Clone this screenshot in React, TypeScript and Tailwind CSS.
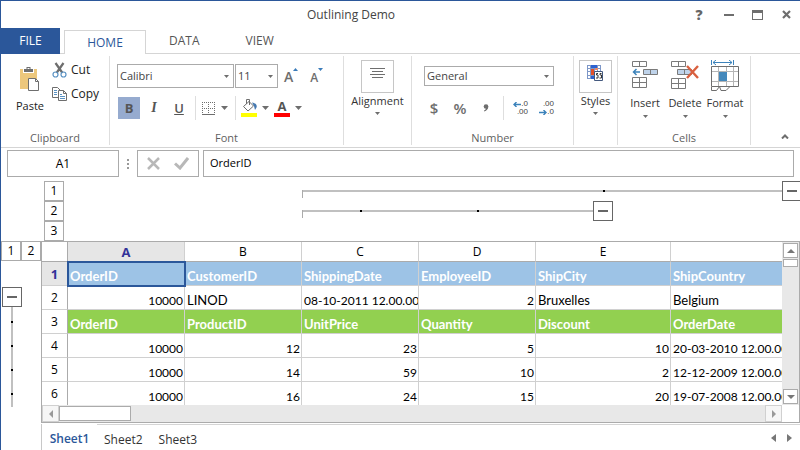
import React from "react";

type Row = { kind: "blue" | "green" | "plain"; cells: (string | number)[] };

const rows: Row[] = [
  { kind: "blue", cells: ["OrderID", "CustomerID", "ShippingDate", "EmployeeID", "ShipCity", "ShipCountry"] },
  { kind: "plain", cells: [10000, "LINOD", "08-10-2011 12.00.00", 2, "Bruxelles", "Belgium"] },
  { kind: "green", cells: ["OrderID", "ProductID", "UnitPrice", "Quantity", "Discount", "OrderDate"] },
  { kind: "plain", cells: [10000, 12, 23, 5, 10, "20-03-2010 12.00.00"] },
  { kind: "plain", cells: [10000, 14, 59, 10, 2, "12-12-2009 12.00.00"] },
  { kind: "plain", cells: [10000, 16, 24, 15, 20, "19-07-2008 12.00.00"] },
];

const rowStyle = {
  blue: "bg-[#9dc3e6] font-bold text-white",
  green: "bg-[#92d050] font-bold text-white",
  plain: "bg-white text-black",
};

// Numbers and dates are set one size below words.
const hasDigits = (cell: string | number) => /\d/.test(String(cell));

function Caret() {
  return (
    <svg width="7" height="4" viewBox="0 0 7 4" aria-hidden="true">
      <path d="M0 0h7L3.5 4z" fill="#6e6e6e" />
    </svg>
  );
}

function SmallCaret() {
  return (
    <svg width="5" height="3" viewBox="0 0 5 3" aria-hidden="true">
      <path d="M0 0h5L2.5 3z" fill="#6e6e6e" />
    </svg>
  );
}

function Picker({ label, value, className }: { label: string; value: string; className: string }) {
  return (
    <div className={`relative ${className}`}>
      <select
        aria-label={label}
        defaultValue={value}
        className="h-full w-full appearance-none border border-[#ababab] bg-white pl-[2px] text-[11px] text-[#444]"
      >
        <option>{value}</option>
      </select>
      <span className="pointer-events-none absolute inset-y-0 right-[5px] flex items-center">
        <SmallCaret />
      </span>
    </div>
  );
}

function Group({ label, className = "", children }: { label?: string; className?: string; children: React.ReactNode }) {
  return (
    <section className={`flex shrink-0 flex-col ${className}`}>
      <div className="h-[76px]">{children}</div>
      <div className="text-center text-[11px] leading-4 text-[#5f5f5f]">{label}</div>
    </section>
  );
}

function Divider() {
  return <div className="my-[2px] w-px shrink-0 bg-[#dedede]" />;
}

function PasteIcon() {
  return (
    <svg width="20" height="26" viewBox="0 0 20 26" aria-hidden="true">
      <path d="M0 3h17v20H0z" fill="#ecc77c" />
      <path d="M3 2h11v5H3z" fill="#fff" />
      <path d="M4 3h2.500V1h4v2H13v3H4z" fill="#6e6e6e" />
      <path d="M7.500 2h2v1h-2z" fill="#fff" />
      <path d="M8.500 12.500h7l3 3v9h-10z" fill="#fff" stroke="#6e6e6e" />
      <path d="M15.500 12.500v3h3" fill="none" stroke="#6e6e6e" />
    </svg>
  );
}

function CutIcon() {
  return (
    <svg width="15" height="16" viewBox="0 0 15 16" fill="none" aria-hidden="true">
      <path d="M3.500 1l7 10M11.500 1l-7 10" stroke="#6e6e6e" strokeWidth="2.200" />
      <circle cx="3.500" cy="12.500" r="2.500" stroke="#5b93c4" strokeWidth="1.200" />
      <circle cx="11.500" cy="12.500" r="2.500" stroke="#5b93c4" strokeWidth="1.200" />
    </svg>
  );
}

function CopyIcon() {
  return (
    <svg width="15" height="14" viewBox="0 0 15 14" aria-hidden="true">
      <path d="M.5.500h5l3 3v7h-8z" fill="#fff" stroke="#6e6e6e" />
      <path d="M2 3.500h3M2 5.500h3M2 7.500h3" stroke="#5b93c4" />
      <path d="M6.500 3.500h5l3 3v7h-8z" fill="#fff" stroke="#6e6e6e" />
      <path d="M11.500 3.500v3h3" fill="none" stroke="#6e6e6e" />
      <path d="M8 7.500h2M8 9.500h5M8 11.500h5" stroke="#5b93c4" />
    </svg>
  );
}

function BordersIcon() {
  return (
    <svg width="13" height="13" viewBox="0 0 13 13" fill="none" aria-hidden="true">
      <path d="M0 .5h13M0 6.500h13M.5 0v12M6.500 0v12M12.500 0v12" stroke="#6e6e6e" strokeDasharray="1 1" />
      <path d="M0 12.500h13" stroke="#6e6e6e" />
    </svg>
  );
}

function FillIcon() {
  return (
    <svg width="16" height="18" viewBox="0 0 16 18" fill="none" aria-hidden="true">
      <path d="M2.500 7.500L8 2.500l4.500 4.500-5.500 5z" stroke="#6e6e6e" />
      <path d="M5.500 5V.5h3V6" stroke="#6e6e6e" />
      <path d="M11 3.500c3.500.500 5.500 2.500 4.500 5L14 11l-1-4z" fill="#4478b0" />
      <path d="M0 14h16v4H0z" fill="#ff0" />
    </svg>
  );
}

function FontGrow() {
  return (
    <svg width="5" height="3" viewBox="0 0 5 3" aria-hidden="true">
      <path d="M0 3h5L2.500 0z" fill="#3b7cba" />
    </svg>
  );
}

function FontShrink() {
  return (
    <svg width="5" height="3" viewBox="0 0 5 3" aria-hidden="true">
      <path d="M0 0h5L2.500 3z" fill="#3b7cba" />
    </svg>
  );
}

function DecimalButton({ label, up }: { label: string; up: boolean }) {
  const arrow = (
    <svg width="8" height="5" viewBox="0 0 8 5" fill="none" aria-hidden="true" className="shrink-0">
      <path d={up ? "M8 2.500H1M3.500 0L1 2.500 3.500 5" : "M0 2.500h7M4.500 0L7 2.500 4.500 5"} stroke="#3b82ba" strokeWidth="1.400" />
    </svg>
  );
  return (
    <button
      aria-label={label}
      className="flex w-4 flex-col items-end font-['Liberation_Sans',sans-serif] text-[8px] leading-[8px] text-[#444]"
    >
      <span className="flex items-center">{up && arrow}{up ? ".0" : ".00"}</span>
      <span className="flex items-center">{!up && arrow}{up ? ".00" : ".0"}</span>
    </button>
  );
}

function StylesIcon() {
  return (
    <svg width="17" height="17" viewBox="0 0 17 17" aria-hidden="true">
      <path d="M0 0h14v14H0z" fill="#7d97c8" />
      <path d="M1 1h2v2H1zM1 4h2v2H1zM1 7h2v3H1zM1 11h2v2H1zM11 1h2v2h-2zM11 4h2v2h-2zM8 4h2v2H8z" fill="#fff" />
      <path d="M4 0h6v3H4z" fill="#2c62d0" />
      <path d="M4 4h3v6H4z" fill="#e2502a" />
      <path d="M8 3h3v2H8z" fill="#e98b6c" />
      <path d="M4 11h3v3H4z" fill="#2c62d0" />
      <path d="M7.500 6.500h8v9h-8z" fill="#fff" stroke="#44597e" />
      <path d="M11 8.500H9.500v1.500H11v3H9M14.500 8.500H13v1.500h1.500v3h-2" fill="none" stroke="#333" />
    </svg>
  );
}

function InsertIcon() {
  return (
    <svg width="28" height="32" viewBox="0 0 28 32" fill="none" aria-hidden="true">
      <path d="M1.500 1.500h14v5h-14zM8.500 1.500v5M1.500 17.500h14v10h-14zM1.500 22.500h14M8.500 17.500v10" stroke="#7a7a7a" />
      <path d="M12.500 9.500h14v5h-14zM19.500 9.500v5" fill="#bfd3ea" stroke="#7a7a7a" />
      <path d="M9 12H3M5.500 9L2.500 12l3 3" stroke="#3b82ba" strokeWidth="1.500" />
    </svg>
  );
}

function DeleteIcon() {
  return (
    <svg width="28" height="32" viewBox="0 0 28 32" fill="none" aria-hidden="true">
      <path d="M.5 1.500h14v5h-14zM7.500 1.500v5M.5 18.500h14v10h-14zM.5 23.500h14M7.500 18.500v10" stroke="#7a7a7a" />
      <path d="M6.500 9.500h14v5h-14zM13.500 9.500v5" fill="#bfd3ea" stroke="#7a7a7a" />
      <path d="M16 6l11 12M27 6L16 18" stroke="#d9603f" strokeWidth="2.400" />
    </svg>
  );
}

function FormatIcon() {
  return (
    <svg width="28" height="32" viewBox="0 0 28 32" fill="none" aria-hidden="true">
      <path d="M.5 0v5M22.500 0v5M2 2.500h19M5 0L2 2.500 5 5M18 0l3 2.500L18 5" stroke="#3b82ba" />
      <path d="M7.500 7v20M15.500 7v20M22.500 7v20M0 11.500h27M0 21.500h27" stroke="#b5b5b5" />
      <path d="M8 12h8v9H8z" fill="#4488bb" />
      <path d="M.5 6.500h27v20H.5z" stroke="#6e6e6e" />
      <path d="M.5 27v3.500h5l3-4 1.500 4h5l4-4" stroke="#6e6e6e" />
    </svg>
  );
}

function TallButton({ label, children }: { label: string; children: React.ReactNode }) {
  return (
    <button className="flex w-10 flex-col items-center text-[11px] leading-4 text-[#333]">
      <span className="mb-[3px]">{children}</span>
      {label}
      <span className="mt-1"><SmallCaret /></span>
    </button>
  );
}

function BoxedButton({ label, children }: { label: string; children: React.ReactNode }) {
  return (
    <button className="mx-auto mt-[6px] flex flex-col items-center text-[11px] leading-4 text-[#333]">
      <span className="flex h-[33px] w-[33px] justify-center border border-[#c6c6c6]">{children}</span>
      {label}
      <span className="mt-[3px]"><SmallCaret /></span>
    </button>
  );
}

function Collapse({ label, className = "" }: { label: string; className?: string }) {
  return (
    <button
      aria-label={label}
      className={`flex size-5 shrink-0 items-center justify-center border border-[#666] bg-white ${className}`}
    >
      <span className="h-[2px] w-[10px] bg-[#666]" />
    </button>
  );
}

function Level({ n }: { n: number }) {
  return (
    <button className="size-5 shrink-0 border border-[#ababab] bg-white text-center text-[12px] leading-[18px]">{n}</button>
  );
}

function Dot() {
  return <span className="size-[2px] shrink-0 bg-black" />;
}

function Ribbon() {
  return (
    <div className="flex h-[94px] border-b border-[#d5d5d5]">
      <Group label="Clipboard" className="w-[108px]">
        <div className="flex pt-[7px]">
          <button className="ml-[15px] mt-[5px] flex w-7 flex-col items-center text-[11px] leading-4 text-[#222]">
            <PasteIcon />
            <span className="mt-[6px]">Paste</span>
          </button>
          <div className="ml-2 flex flex-col gap-2 pt-px text-[12px] leading-4 text-[#222]">
            <button className="flex items-center gap-1"><CutIcon />Cut</button>
            <button className="flex items-center gap-1"><CopyIcon />Copy</button>
          </div>
        </div>
      </Group>
      <Divider />
      <Group label="Font" className="w-[233px]">
        <div className="flex pl-[7px] pt-[10px]">
          <Picker label="Font family" value="Calibri" className="h-6 w-[117px]" />
          <Picker label="Font size" value="11" className="ml-px h-6 w-[43px]" />
          <button aria-label="Increase font size" className="ml-[6px] flex items-start pt-1 font-semibold text-[#6e6e6e]">
            <span className="pt-px text-[14px] leading-4">A</span><FontGrow />
          </button>
          <button aria-label="Decrease font size" className="ml-3 flex items-start pt-1 font-semibold text-[#6e6e6e]">
            <span className="pt-[2px] text-[12px] leading-4">A</span><FontShrink />
          </button>
        </div>
        <div className="flex items-center pl-2 pt-2 text-[13px] text-[#555]">
          <button aria-label="Bold" className="size-[22px] bg-[#96abcf] font-bold leading-5">B</button>
          <button aria-label="Italic" className="ml-[3px] size-[22px] font-['Liberation_Serif',serif] text-[14px] font-bold italic leading-5">I</button>
          <button aria-label="Underline" className="ml-[3px] size-[22px] font-semibold leading-5 underline">U</button>
          <span className="ml-[5px] h-6 w-px bg-[#dedede]" />
          <button aria-label="Borders" className="ml-[6px] flex items-center gap-[6px]"><BordersIcon /><Caret /></button>
          <span className="ml-[7px] h-6 w-px bg-[#dedede]" />
          <button aria-label="Fill color" className="ml-[5px] flex items-center gap-[5px]"><FillIcon /><Caret /></button>
          <button aria-label="Font color" className="ml-[5px] flex items-center gap-[5px]">
            <span className="flex h-[18px] w-4 flex-col items-center justify-end border-b-4 border-[#f00] font-bold leading-[14px]">A</span>
            <Caret />
          </button>
        </div>
      </Group>
      <Divider />
      <Group className="w-[67px]">
        <div className="flex">
          <BoxedButton label="Alignment">
            <svg width="15" height="31" viewBox="0 0 15 31" aria-hidden="true">
              <path d="M0 7.500h15M2 10.500h11M0 13.500h15M2 16.500h11" stroke="#6e6e6e" />
            </svg>
          </BoxedButton>
        </div>
      </Group>
      <Divider />
      <Group label="Number" className="w-[161px]">
        <div className="pl-3 pt-3">
          <Picker label="Number format" value="General" className="h-5 w-[130px]" />
        </div>
        <div className="flex items-center pl-3 pt-[10px] text-[15px] leading-6 text-[#6e6e6e]">
          <button aria-label="Currency" className="w-5 font-semibold">$</button>
          <button aria-label="Percent" className="ml-[6px] w-5 font-semibold">%</button>
          <button aria-label="Comma style" className="ml-[6px] flex w-5 justify-center">
            <svg width="6" height="8" viewBox="0 0 6 8" aria-hidden="true">
              <circle cx="3" cy="2.500" r="2.300" fill="#6e6e6e" />
              <path d="M5.300 2.500c0 2.500-1.500 4-4 5L1 6.500c1.500-.500 2-1.500 2-2.500z" fill="#6e6e6e" />
            </svg>
          </button>
          <span className="ml-[7px] h-6 w-px bg-[#dedede]" />
          <span className="ml-2 flex gap-[10px]">
            <DecimalButton label="Increase decimal" up />
            <DecimalButton label="Decrease decimal" up={false} />
          </span>
        </div>
      </Group>
      <Divider />
      <Group className="w-[43px]">
        <div className="flex">
          <BoxedButton label="Styles"><span className="pt-1"><StylesIcon /></span></BoxedButton>
        </div>
      </Group>
      <Divider />
      <Group label="Cells" className="w-[132px]">
        <div className="flex pl-[7px] pt-[6px]">
          <TallButton label="Insert"><InsertIcon /></TallButton>
          <TallButton label="Delete"><DeleteIcon /></TallButton>
          <TallButton label="Format"><FormatIcon /></TallButton>
        </div>
      </Group>
      <Divider />
      <div className="flex flex-1 items-end justify-end pb-2 pr-[11px]">
        <button aria-label="Collapse the ribbon">
          <svg width="8" height="5" viewBox="0 0 8 5" fill="none" aria-hidden="true">
            <path d="M1 4.500l3-3 3 3" stroke="#6e6e6e" strokeWidth="2" />
          </svg>
        </button>
      </div>
    </div>
  );
}

function Grid() {
  return (
    <div className="flex">
      <aside className="w-10 shrink-0">
        <div className="flex"><Level n={1} /><Level n={2} /></div>
        <div className="flex w-[21px] flex-col items-center pl-px pt-[26px]">
          <Collapse label="Collapse rows" />
          <div className="flex h-[100px] w-[2px] flex-col gap-[22px] bg-[#c0c0c0] pt-[14px]">
            <Dot /><Dot /><Dot /><Dot />
          </div>
        </div>
      </aside>
      <div className="flex min-w-0 flex-1 flex-col border border-[#ababab]">
        <div className="flex h-[163px]">
          <div className="min-w-0 flex-1 overflow-hidden">
            <table className="w-[868px] table-fixed border-separate border-spacing-0 font-['Lato',sans-serif]">
              <colgroup>
                <col className="w-[26px]" />
                <col className="w-[117px]" />
                <col className="w-[117px]" />
                <col className="w-[117px]" />
                <col className="w-[117px]" />
                <col className="w-[135px]" />
                <col />
              </colgroup>
              <thead>
                <tr className="h-5 font-['Open_Sans',sans-serif]">
                  <th aria-label="Select all" className="border-b border-r border-[#ababab] p-0" />
                  {["A", "B", "C", "D", "E", "F"].map((c, i) => (
                    <th
                      key={c}
                      scope="col"
                      className={`border-b border-r border-b-[#ababab] border-r-[#d0d0d0] p-0 leading-[18px] ${
                        i === 0 ? "bg-[#e6e6e6] text-[13px] font-bold text-[#333399]" : "text-[12px] font-normal"
                      }`}
                    >
                      {c}
                    </th>
                  ))}
                </tr>
              </thead>
              <tbody>
                {rows.map((row, r) => (
                  <tr key={r} className="h-6">
                    <th
                      scope="row"
                      className={`border-b border-r border-b-[#d0d0d0] border-r-[#ababab] p-0 font-['Open_Sans',sans-serif] leading-[22px] ${
                        r === 0 ? "bg-[#e6e6e6] text-[13px] font-bold text-[#333399]" : "text-[12px] font-normal"
                      }`}
                    >
                      {r + 1}
                    </th>
                    {row.cells.map((cell, c) => (
                      <td
                        key={c}
                        className={`border-b border-r border-[#d0d0d0] p-0 align-bottom ${rowStyle[row.kind]} ${
                          r === 0 && c === 0 ? "relative z-10 outline-2 -outline-offset-1 outline-[#2b579a]" : ""
                        }`}
                      >
                        <div
                          className={`overflow-hidden whitespace-nowrap leading-[17px] ${
                            typeof cell === "number" ? "pr-px text-right" : "pl-[2px]"
                          } ${hasDigits(cell) ? "text-[12px]" : "text-[13px]"}`}
                        >
                          {cell}
                        </div>
                      </td>
                    ))}
                  </tr>
                ))}
              </tbody>
            </table>
          </div>
          <div className="flex w-[17px] shrink-0 flex-col bg-[#e8e8e8] p-px">
            <button aria-label="Scroll up" className="flex h-[15px] items-center justify-center border border-[#ababab] bg-white">
              <svg width="8" height="4" viewBox="0 0 8 4" aria-hidden="true"><path d="M0 4h8L4 0z" fill="#777" /></svg>
            </button>
            <div className="mt-px h-2 border border-[#ababab] bg-white" />
            <div className="flex-1" />
            <button aria-label="Scroll down" className="flex h-[15px] items-center justify-center border border-[#ababab] bg-white">
              <svg width="8" height="4" viewBox="0 0 8 4" aria-hidden="true"><path d="M0 0h8L4 4z" fill="#777" /></svg>
            </button>
          </div>
        </div>
        <div className="mr-[17px] flex h-[17px] bg-[#e8e8e8]">
          <button aria-label="Scroll left" className="flex w-[17px] items-center justify-center border border-[#d0d0d0] bg-[#f6f6f6]">
            <svg width="4" height="8" viewBox="0 0 4 8" aria-hidden="true"><path d="M4 0v8L0 4z" fill="#999" /></svg>
          </button>
          <div className="my-px w-[72px] border border-[#ababab] bg-white" />
          <div className="flex-1" />
          <button aria-label="Scroll right" className="flex w-[17px] items-center justify-center border border-[#d0d0d0] bg-[#f6f6f6]">
            <svg width="4" height="8" viewBox="0 0 4 8" aria-hidden="true"><path d="M0 0v8l4-4z" fill="#999" /></svg>
          </button>
        </div>
      </div>
    </div>
  );
}

export default function App() {
  return (
    <div className="min-h-screen overflow-hidden border-l border-t border-[#2b579a] bg-white font-['Open_Sans',sans-serif] text-[12px] text-black">
      <header className="flex h-[27px] items-center text-[#666]">
        <h1 className="flex-1 text-center text-[12px] text-[#444]">Outlining Demo</h1>
        <div className="flex w-[99px] items-center pr-[9px]">
          <button aria-label="Help" className="-ml-[12px] w-5 text-center text-[14px] font-extrabold leading-5">?</button>
          <button aria-label="Minimize" className="ml-[15px] h-[2px] w-[10px] bg-[#6e6e6e]" />
          <button aria-label="Maximize" className="ml-[18px] h-[10px] w-[11px] border border-t-[3px] border-[#6e6e6e]" />
          <button aria-label="Close" className="ml-[19px]">
            <svg width="9" height="9" viewBox="0 0 9 9" aria-hidden="true"><path d="M1 1l7 7M8 1L1 8" stroke="#6e6e6e" strokeWidth="2.200" /></svg>
          </button>
        </div>
      </header>

      <nav className="flex h-[26px] text-[12px] text-[#555]">
        <button className="w-[59px] bg-[#2b579a] text-white">FILE</button>
        <div className="w-1 border-b border-[#d5d5d5]" />
        <button className="mt-[2px] w-[82px] border-x border-t border-[#d5d5d5] text-[#2b579a]">HOME</button>
        <div className="flex flex-1 gap-[46px] border-b border-[#d5d5d5] pl-[23px]">
          <button>DATA</button>
          <button>VIEW</button>
        </div>
      </nav>

      <Ribbon />

      <div className="flex h-[29px] px-[6px] pt-[2px]">
        <input aria-label="Name box" defaultValue="A1" className="w-28 border border-[#ababab] text-center" />
        <div className="flex w-[18px] flex-col items-center justify-center gap-[2px]">
          <span className="size-[2px] bg-[#999]" />
          <span className="size-[2px] bg-[#999]" />
          <span className="size-[2px] bg-[#999]" />
        </div>
        <div className="flex w-[62px] items-center justify-center gap-[14px] border border-[#ababab]">
          <button aria-label="Cancel">
            <svg width="13" height="13" viewBox="0 0 13 13" aria-hidden="true"><path d="M1 1l11 11M12 1L1 12" stroke="#b8b8b8" strokeWidth="2.500" /></svg>
          </button>
          <button aria-label="Enter">
            <svg width="15" height="13" viewBox="0 0 15 13" fill="none" aria-hidden="true"><path d="M1 6.500l5 4.500L14 1" stroke="#b8b8b8" strokeWidth="3" /></svg>
          </button>
        </div>
        <input aria-label="Formula" defaultValue="OrderID" className="ml-1 min-w-0 flex-1 border border-[#ababab] pl-[6px] text-[11px]" />
      </div>

      <div className="flex pl-[43px] pt-1">
        <div className="flex flex-col"><Level n={1} /><Level n={2} /><Level n={3} /></div>
        <div className="ml-[238px] flex-1">
          <div className="flex h-5 items-center">
            <div className="mt-[6px] h-2 w-px bg-[#ababab]" />
            <div className="flex h-[2px] flex-1 bg-[#c0c0c0] pl-[300px]"><Dot /></div>
            <Collapse label="Collapse columns, level 1" className="-mr-[2px]" />
          </div>
          <div className="flex h-5 items-center">
            <div className="mt-[6px] h-2 w-px bg-[#ababab]" />
            <div className="flex h-[2px] w-[290px] gap-[115px] bg-[#c0c0c0] pl-[57px]"><Dot /><Dot /></div>
            <Collapse label="Collapse columns, level 2" />
          </div>
        </div>
      </div>

      <Grid />

      <footer className="ml-10 mt-px flex h-[26px] border-l border-[#c8c8c8] text-[12px] text-[#333]">
        <button className="w-[55px] pt-[3px] font-semibold text-[#2b579a]">Sheet1</button>
        <div className="flex flex-1 items-center border-t border-[#d5d5d5] pl-[7px] pr-2">
          <button className="pt-[5px]">Sheet2</button>
          <button className="ml-4 pt-[5px]">Sheet3</button>
          <div className="flex-1" />
          <button aria-label="Previous sheet">
            <svg width="5" height="8" viewBox="0 0 5 8" aria-hidden="true"><path d="M5 0v8L0 4z" fill="#777" /></svg>
          </button>
          <button aria-label="Next sheet" className="ml-[11px]">
            <svg width="5" height="8" viewBox="0 0 5 8" aria-hidden="true"><path d="M0 0v8l5-4z" fill="#777" /></svg>
          </button>
        </div>
      </footer>
    </div>
  );
}
